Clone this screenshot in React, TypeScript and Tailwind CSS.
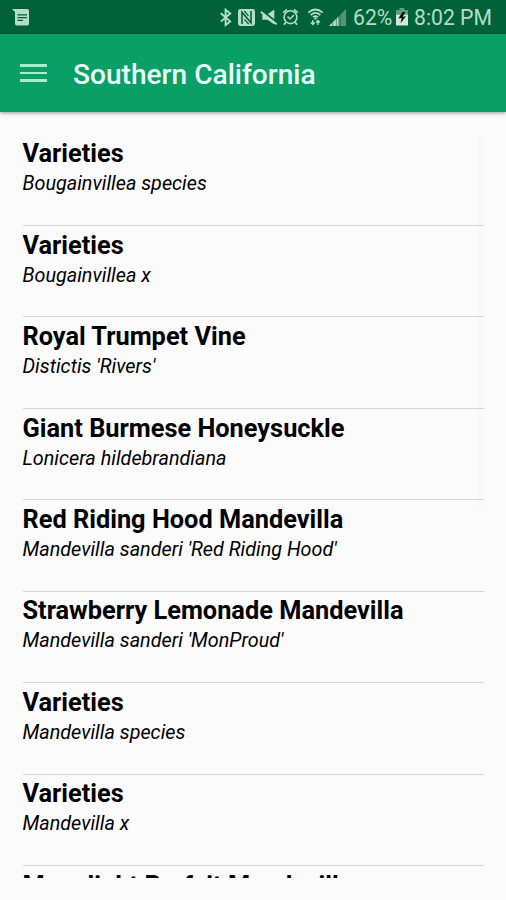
const plants = [
  { name: "Varieties", latin: "Bougainvillea species" },
  { name: "Varieties", latin: "Bougainvillea x" },
  { name: "Royal Trumpet Vine", latin: "Distictis 'Rivers'" },
  { name: "Giant Burmese Honeysuckle", latin: "Lonicera hildebrandiana" },
  { name: "Red Riding Hood Mandevilla", latin: "Mandevilla sanderi 'Red Riding Hood'" },
  { name: "Strawberry Lemonade Mandevilla", latin: "Mandevilla sanderi 'MonProud'" },
  { name: "Varieties", latin: "Mandevilla species" },
  { name: "Varieties", latin: "Mandevilla x" },
  { name: "Moonlight Parfait Mandevilla", latin: "" },
];

function NoteIcon() {
  return (
    <svg className="ml-3 h-[18px] w-[18px]" viewBox="0 0 18 18">
      <path d="M0 1H15.3Q17 1 17 2.7V15.8Q17 17.5 15.3 17.5H4.7Q3 17.5 3 15.8V4Z" fill="#b5dcc8" />
      <path d="M5.5 6.8H15M5.5 9.6H15M5.5 12.4H11" stroke="#00623b" strokeWidth="1.3" />
    </svg>
  );
}

function StatusIcons() {
  return (
    <svg className="h-[34px] w-[130px]" viewBox="218 0 130 34" fill="none" stroke="#b5dcc8">
      <path d="M220.8 13.2L230.2 21.4L225.6 25V9.8L230.2 13.5L220.8 21.6" strokeWidth="1.9" />
      <rect x="238" y="9" width="17" height="17" rx="2.4" fill="#b5dcc8" stroke="none" />
      <path d="M242 24V12.2L251 22.8V11" stroke="#00623b" strokeWidth="1.6" />
      <path d="M244.3 11L248.5 15.8M244.5 19.5L248.7 24.2" stroke="#00623b" strokeWidth="1.2" />
      <path d="M262.3 14.2H267.5L274.3 9.4V24.4L267.5 19.7H262.3Z" fill="#b5dcc8" stroke="none" />
      <path d="M261 9.9L277.3 22.9" stroke="#00623b" strokeWidth="2" />
      <path d="M260.8 11.8L276.6 24.2" strokeWidth="2" />
      <circle cx="290.5" cy="17.2" r="6.4" strokeWidth="1.6" />
      <path d="M283.2 12.7L287 9.3M297.8 12.7L294 9.3M285.8 22.2L284 24.7M295.2 22.2L297 24.7" strokeWidth="1.7" />
      <path d="M287.5 16.5L290 19L294 15" strokeWidth="1.5" />
      <path d="M308.3 12.7Q315.5 6.3 322.7 12.7M310.7 15Q315.5 10.9 320.3 15M313 17.1Q315.5 15 318 17.1" strokeWidth="1.7" />
      <circle cx="315.5" cy="18.4" r="1.2" fill="#b5dcc8" stroke="none" />
      <path d="M312.8 20V24.5M310.9 22.6L312.8 24.6L314.7 22.6M317.9 25V20.6M316 22.4L317.9 20.4L319.8 22.4" strokeWidth="1.4" />
      <path d="M329 26L346 9V26Z" fill="#549579" stroke="none" />
      <path d="M329 26L338.3 16.7V26Z" fill="#b5dcc8" stroke="none" />
      <path d="M332.7 20V26M336.3 17V26M340.2 13V26" stroke="#00623b" strokeWidth=".6" />
    </svg>
  );
}

function BatteryIcon() {
  return (
    <svg className="h-[18px] w-3" viewBox="0 0 12 18">
      <path d="M3.5 0H8.5V2H12V6.5H0V2H3.5Z" fill="#5e9c82" />
      <path d="M0 6.5H12V17.5H0Z" fill="#d3e8dd" />
      <path d="M6.5 4L2.3 10.5L5.7 10L4.5 15.3L10 8.3L6.8 8.8L9.2 4Z" fill="#07150e" />
    </svg>
  );
}

export default function App() {
  return (
    <div className="flex h-[900px] w-[506px] flex-col overflow-hidden bg-[#fbfbfb] font-['Roboto',sans-serif]">
      <div className="flex h-[34px] shrink-0 items-center bg-[#00623b] text-[#b5dcc8]">
        <NoteIcon />
        <div className="ml-auto flex h-[34px] items-center pr-[12px]">
          <StatusIcons />
          <span className="ml-[5px] w-[43px] pt-[2px] text-[21.2px] leading-[34px] whitespace-nowrap">62%</span>
          <BatteryIcon />
          <span className="ml-[6px] w-[80px] pt-[2px] text-[21.2px] leading-[34px] whitespace-nowrap">8:02 PM</span>
        </div>
      </div>
      <header className="z-10 flex h-[78px] shrink-0 items-center bg-[#0a9f67] pl-5 shadow-[0_1px_4px_rgba(0,0,0,0.4)]">
        <div className="flex w-[27px] flex-col gap-[5px]">
          <i className="h-[2.5px] bg-[#a5efcf]" />
          <i className="h-[2.5px] bg-[#a5efcf]" />
          <i className="h-[2.5px] bg-[#a5efcf]" />
        </div>
        <h1 className="ml-[26px] pt-[3px] text-[28.1px] leading-8 font-medium text-[#e8fff7]">Southern California</h1>
      </header>
      <main className="relative h-[766px] shrink-0 overflow-hidden px-[22.5px] pt-[22.6px] text-black">
        {plants.map((plant, i) => (
          <article key={i} className="h-[91.43px] border-b border-[#d5d5d5] pt-[3.7px]">
            <h2 className="text-[25.35px] leading-[31px] font-bold whitespace-nowrap">{plant.name}</h2>
            {plant.latin && (
              <p className="text-[19.8px] leading-[29px] whitespace-nowrap italic">{plant.latin}</p>
            )}
          </article>
        ))}
        <div className="absolute top-[23px] right-[22px] h-[375px] w-[7px] bg-black/[0.008]" />
      </main>
      <footer className="h-[22px] shrink-0 bg-[#fbfbfb]" />
    </div>
  );
}
